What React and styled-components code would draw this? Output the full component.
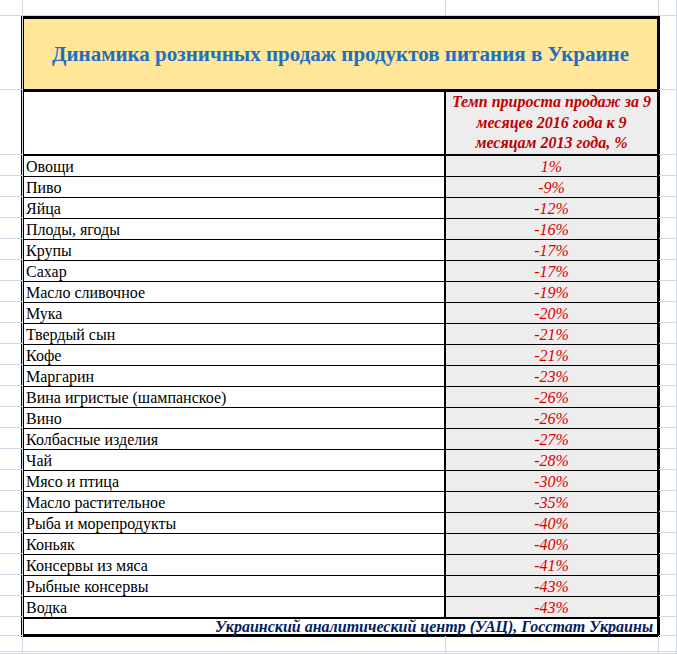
import React from "react";
import styled, { createGlobalStyle } from "styled-components";

const GlobalStyle = createGlobalStyle`
  html, body {
    margin: 0;
    padding: 0;
    background: #fff;
  }
`;

// высоты строк листа (как в Excel), последняя растягивается
const ROW_HEIGHTS = [16, 74, 65, ...Array(22).fill(21), 19, 16];

const rows = [
  ["Овощи", "1%"],
  ["Пиво", "-9%"],
  ["Яйца", "-12%"],
  ["Плоды, ягоды", "-16%"],
  ["Крупы", "-17%"],
  ["Сахар", "-17%"],
  ["Масло сливочное", "-19%"],
  ["Мука", "-20%"],
  ["Твердый сын", "-21%"],
  ["Кофе", "-21%"],
  ["Маргарин", "-23%"],
  ["Вина игристые (шампанское)", "-26%"],
  ["Вино", "-26%"],
  ["Колбасные изделия", "-27%"],
  ["Чай", "-28%"],
  ["Мясо и птица", "-30%"],
  ["Масло растительное", "-35%"],
  ["Рыба и морепродукты", "-40%"],
  ["Коньяк", "-40%"],
  ["Консервы из мяса", "-41%"],
  ["Рыбные консервы", "-43%"],
  ["Водка", "-43%"],
];

const Sheet = styled.div`
  display: grid;
  grid-template-columns: 23px 423px 213px 1fr;
  grid-template-rows: ${ROW_HEIGHTS.map((h) => `${h}px`).join(" ")} 1fr;
  height: 100vh;
  overflow: hidden;
  font-family: "Liberation Serif", "Times New Roman", serif;
`;

const GridCell = styled.div`
  box-sizing: border-box;
  border-right: 1px solid #d0d7e5;
  border-bottom: 1px solid #d0d7e5;
`;

const Table = styled.div`
  grid-column: 2 / 4;
  grid-row: 2 / 27;
  align-self: start;
  margin-left: -2px;
  width: 639px;
  height: 621px;
  box-sizing: border-box;
  border: 3px solid #000;
  background: #fff;
  display: grid;
  grid-template-columns: 422px 1fr;
  grid-template-rows: 73px 64px repeat(21, 21px) 22px 15px;
`;

const TitleCell = styled.div`
  grid-column: 1 / -1;
  background: #ffe699;
  border-bottom: 3px solid #000;
  display: flex;
  align-items: center;
  justify-content: center;
  padding-top: 1px;
  font-size: 21px;
  font-weight: bold;
  color: #1f6fbf;
`;

const LabelCell = styled.div`
  box-sizing: border-box;
  border-right: 2px solid #000;
  border-bottom: ${(p) => p.$border || 1}px solid #000;
  display: flex;
  align-items: flex-end;
  padding-left: 2px;
  font-size: 16px;
  line-height: 18px;
  color: #000;
  white-space: nowrap;
`;

const ValueCell = styled.div`
  box-sizing: border-box;
  background: #ededed;
  border-bottom: ${(p) => p.$border || 1}px solid #000;
  display: flex;
  align-items: flex-end;
  justify-content: center;
  font-size: 16px;
  line-height: 18px;
  font-style: italic;
  color: #d90000;
`;

const HeadCell = styled.div`
  box-sizing: border-box;
  background: #ededed;
  border-bottom: 2px solid #000;
  display: flex;
  align-items: center;
  justify-content: center;
  text-align: center;
  font-size: 16px;
  line-height: 20.5px;
  font-weight: bold;
  font-style: italic;
  color: #c00000;
`;

const Footer = styled.div`
  grid-column: 1 / -1;
  text-align: right;
  padding-right: 4px;
  font-size: 16px;
  line-height: 15px;
  font-weight: bold;
  font-style: italic;
  color: #002060;
  white-space: nowrap;
`;

const App = () => {
  // клетки листа вокруг таблицы (сетка Excel)
  const gutterCount = 4 + 25 * 2 + 4 * 2;

  return (
    <>
      <GlobalStyle />
      <Sheet>
        <Table>
          <TitleCell>Динамика розничных продаж продуктов питания в Украине</TitleCell>
          <LabelCell $border={2} />
          <HeadCell>
            Темп прироста продаж за 9
            <br />
            месяцев 2016 года к 9
            <br />
            месяцам 2013 года, %
          </HeadCell>
          {rows.map(([name, value], i) => {
            const border = i === rows.length - 1 ? 2 : 1;
            return (
              <React.Fragment key={name}>
                <LabelCell $border={border}>{name}</LabelCell>
                <ValueCell $border={border}>{value}</ValueCell>
              </React.Fragment>
            );
          })}
          <Footer>Украинский аналитический центр (УАЦ), Госстат Украины</Footer>
        </Table>
        {Array.from({ length: gutterCount }, (_, i) => (
          <GridCell key={i} />
        ))}
      </Sheet>
    </>
  );
};

export default App;
